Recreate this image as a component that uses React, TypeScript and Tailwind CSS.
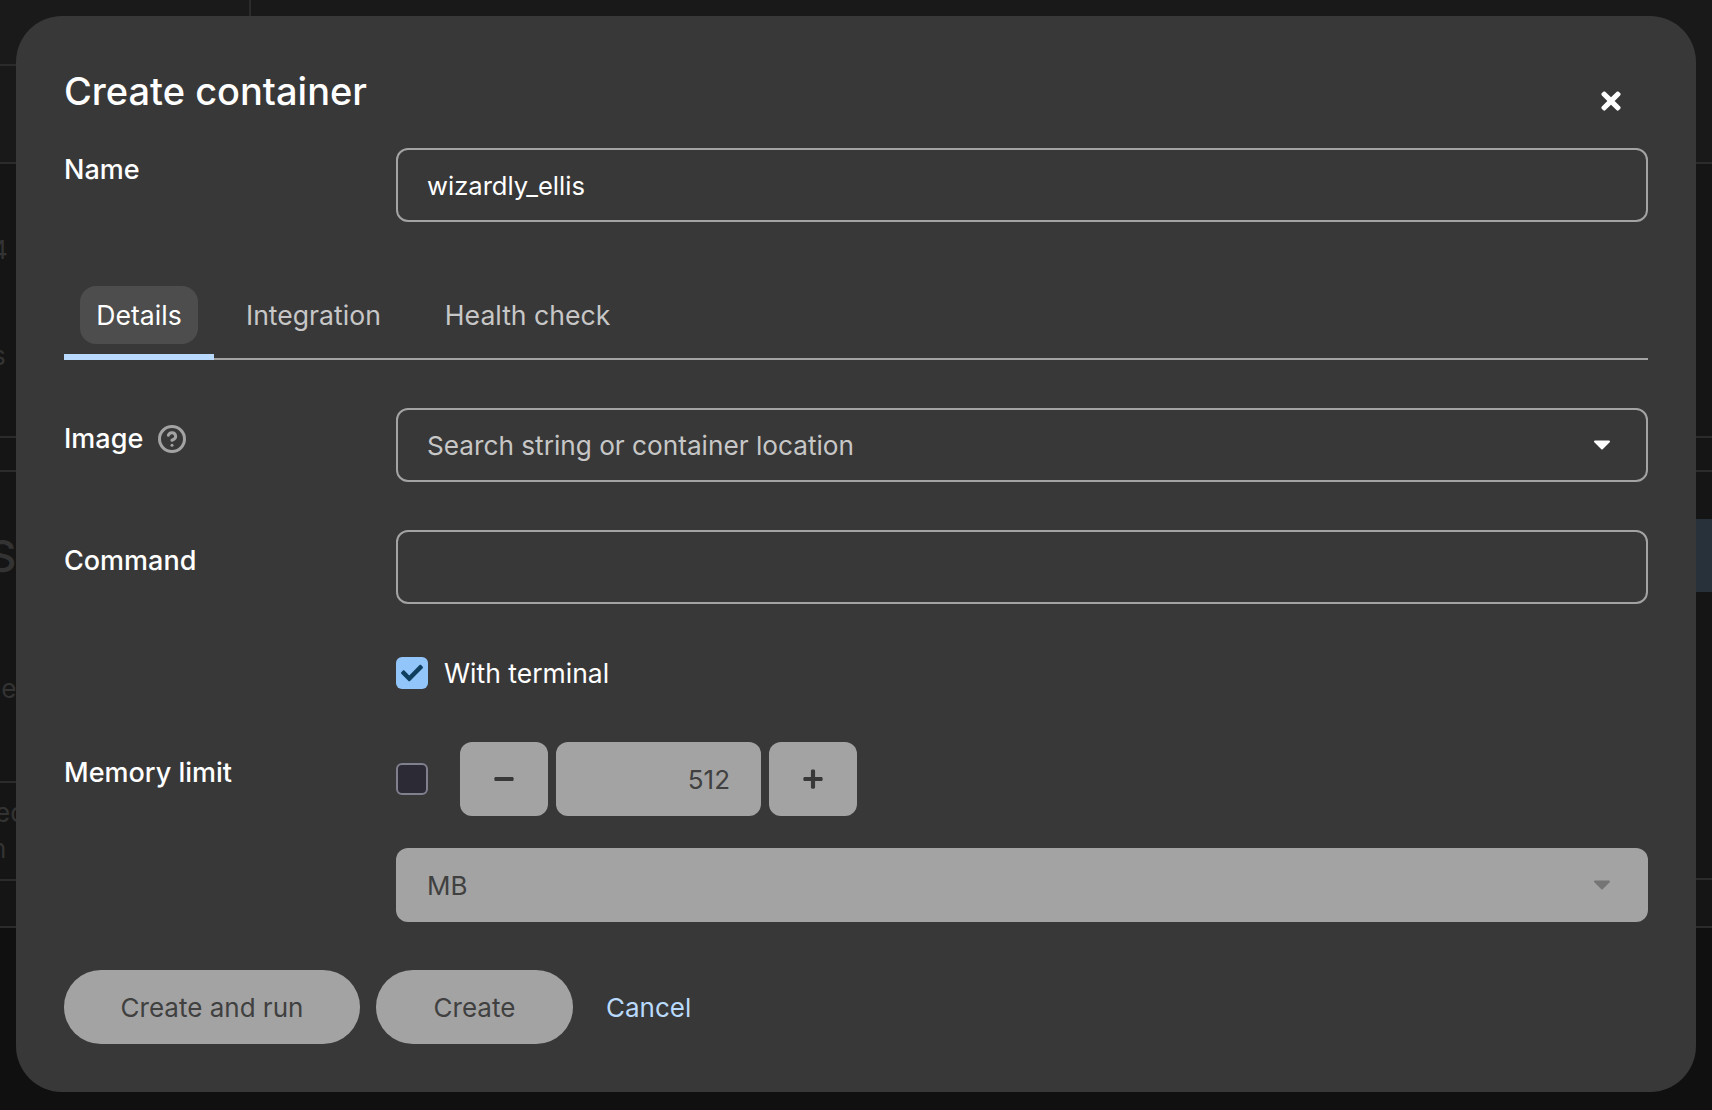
import { CircleHelp } from 'lucide-react'
import { FaCheck, FaMinus, FaPlus, FaTimes } from 'react-icons/fa'

const fieldClass = 'h-[74px] w-full rounded-xl border-2 border-[#a3a3a3] flex items-center justify-between pl-[29px] pr-[36px]'
const disabledClass = 'bg-[#a3a3a3] text-[#404040]'

function Caret({ className }: { className: string }) {
  return (
    <svg viewBox="0 0 16 10" className={`h-[10px] w-4 ${className}`} fill="currentColor">
      <path d="M1 .5h14a1 1 0 0 1 .7 1.7L8.7 9.2a1 1 0 0 1-1.4 0L.3 2.2A1 1 0 0 1 1 .5z" />
    </svg>
  )
}

// page behind the dialog, only the edges show
function Backdrop() {
  return (
    <div className="flex h-[1110px] w-[1712px] flex-col overflow-hidden bg-[#101010] text-[#333]">
      <div className="flex h-[928px] bg-[#151515]">
        <div className="flex w-[251px] flex-col">
          <div className="h-[66px] border-b-2 border-r-2 border-[#2b2b2b] bg-[#1a1a1a] text-2xl leading-none">
            <span className="mt-[24px] -ml-[10px] block">-</span>
          </div>
          <div className="h-[98px] border-b-2 border-[#2b2b2b] bg-[#191919]" />
          <div className="flex h-[274px] flex-col border-b-2 border-[#2b2b2b] text-[26px]">
            <span className="mt-[66px] -ml-[9px]">4</span>
            <span className="mt-[67px] -ml-[8px]">s</span>
          </div>
          <div className="h-[34px] border-b-2 border-[#2b2b2b]" />
          <div className="flex h-[311px] flex-col border-b-2 border-[#2b2b2b]">
            <span className="mt-[62px] -ml-[12px] text-[44px] font-medium leading-none text-[#333]">S</span>
            <span className="mt-[91px] -ml-[14px] text-[26px]">ne</span>
          </div>
          <div className="flex h-[98px] flex-col border-b-2 border-[#2b2b2b] text-[26px]">
            <span className="mt-[17px] -ml-[5px] leading-none">ed</span>
            <span className="mt-[10px] -ml-[9px] leading-none">n</span>
          </div>
          <div className="h-[47px] border-b-2 border-[#2b2b2b]" />
        </div>
        <div className="flex flex-1 flex-col">
          <div className="h-[164px] border-b-2 border-[#2b2b2b] bg-[#191919]" />
          <div className="h-[274px] border-b-2 border-[#2b2b2b]" />
          <div className="h-[34px] border-b-2 border-[#2b2b2b]" />
          <div className="mt-[47px] flex h-[73px] justify-end">
            <div className="flex w-[60px] items-center rounded-l-xl bg-[#28303a] pl-[1px] text-[26px] text-[#3a3f46]">on</div>
          </div>
          <div className="h-[288px] border-b-2 border-[#2b2b2b]" />
          <div className="h-[48px] border-b-2 border-[#2b2b2b]" />
        </div>
      </div>
    </div>
  )
}

function Label({ children, top = 'pt-[13px]' }: { children: React.ReactNode; top?: string }) {
  return <div className={`w-[332px] shrink-0 ${top} text-[27px] font-medium leading-[36px] text-white`}>{children}</div>
}

export default function App() {
  return (
    <div className="relative h-[1110px] w-[1712px] overflow-hidden font-['Inter',sans-serif]">
      <Backdrop />
      {/* Modal */}
      <div className="absolute left-4 top-4 flex h-[1076px] w-[1680px] flex-col rounded-[46px] bg-[#383838] px-12 pt-12 text-[26px] text-white">
        <div className="flex h-[84px] items-start justify-between">
          <h1 className="pt-[3px] text-[38px] font-medium leading-[48px]">Create container</h1>
          <FaTimes className="mr-[26px] mt-[23px] h-[28px] w-[22px]" />
        </div>

        <div className="flex">
          <Label top="pt-[4px]">Name</Label>
          <div className={`${fieldClass} text-[25.6px]`}>
            <span className="pt-[2px]">wizardly_ellis</span>
          </div>
        </div>

        {/* Tabs */}
        <div className="mt-[64px] flex h-[74px] border-b-2 border-[#a3a3a3] text-[26.6px]">
          <div className="h-[74px] w-[150px] border-b-[6px] border-[#b9dafc] px-4">
            <div className="flex h-[58px] items-center justify-center rounded-2xl bg-[#4d4d4d] pt-[2px]">Details</div>
          </div>
          <div className="flex h-[58px] items-center px-4 ml-4 pt-[2px] text-[#c7c7c7]">Integration</div>
          <div className="flex h-[58px] items-center px-4 ml-8 pt-[2px] text-[#c7c7c7]">Health check</div>
        </div>

        <div className="mt-[48px] flex">
          <Label>
            <span className="flex items-center gap-[14px]">
              Image <CircleHelp className="h-[30px] w-[30px] text-[#a3a3a3]" strokeWidth={2.4} />
            </span>
          </Label>
          <div className={fieldClass}>
            <span className="pt-[2px] text-[26.2px] text-[#c7c7c7]">Search string or container location</span>
            <Caret className="text-white" />
          </div>
        </div>

        <div className="mt-[48px] flex">
          <Label>Command</Label>
          <div className={fieldClass} />
        </div>

        <div className="mt-[53px] flex h-8 items-center pl-[332px]">
          <div className="flex h-8 w-8 items-center justify-center rounded-md bg-[#92c5f9]">
            <FaCheck className="h-[22px] w-[22px] text-[#0f3e5e]" />
          </div>
          <span className="ml-4 pt-[2px] text-[26.5px]">With terminal</span>
        </div>

        <div className="mt-[53px] flex">
          <Label>Memory limit</Label>
          <div className="flex h-[74px] items-center">
            <div className="h-8 w-8 rounded-md border-2 border-[#7f7f8e] bg-[#2b2a35]" />
            <div className={`ml-8 flex h-[74px] w-[88px] items-center justify-center rounded-xl ${disabledClass}`}>
              <FaMinus className="h-[22px] w-[22px] text-[#383838]" />
            </div>
            <div className={`ml-2 flex h-[74px] w-[205px] items-center justify-end rounded-xl pr-[31px] ${disabledClass}`}>512</div>
            <div className={`ml-2 flex h-[74px] w-[88px] items-center justify-center rounded-xl ${disabledClass}`}>
              <FaPlus className="h-[22px] w-[22px] text-[#383838]" />
            </div>
          </div>
        </div>

        <div className="mt-8 flex">
          <div className="w-[332px] shrink-0" />
          <div className={`flex h-[74px] w-full items-center justify-between rounded-xl pl-[31px] pr-[38px] ${disabledClass}`}>
            <span>MB</span>
            <Caret className="text-[#757575]" />
          </div>
        </div>

        <div className="mt-12 flex items-center">
          <div className={`flex h-[74px] w-[296px] items-center justify-center rounded-full ${disabledClass}`}>Create and run</div>
          <div className={`ml-4 flex h-[74px] w-[197px] items-center justify-center rounded-full ${disabledClass}`}>Create</div>
          <span className="ml-[33px] text-[#b9dafc]">Cancel</span>
        </div>
      </div>
    </div>
  )
}
